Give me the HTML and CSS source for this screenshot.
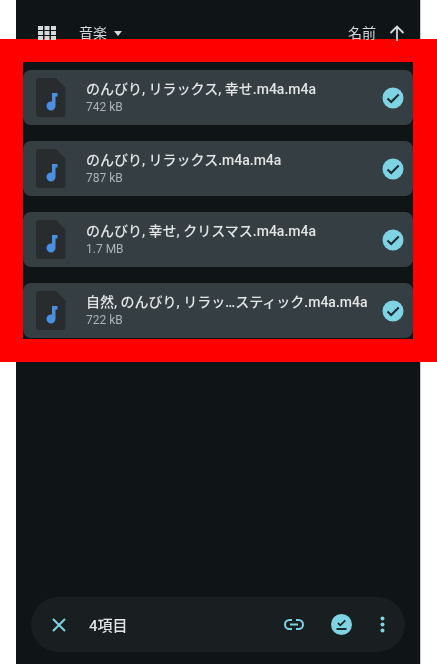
FILE: index.html
```html
<!DOCTYPE html>
<html>
<head>
    <title>音楽</title>
    <link rel="stylesheet" href="styles.css">
</head>
<body>
    <div class="panel">
        <div class="toolbar">
            <svg class="grid-icon" width="18" height="14" viewBox="0 0 18 14">
                <path fill="#d5d9da" d="M0 0h5v4H0zM6.500 0h5v4h-5zM13 0h5v4h-5zM0 5h5v4H0zM6.500 5h5v4h-5zM13 5h5v4h-5zM0 10h5v4H0zM6.500 10h5v4h-5zM13 10h5v4h-5z"/>
            </svg>
            <span class="toolbar-label">音楽</span>
            <span class="caret"></span>
            <span class="sort-label">名前</span>
            <svg class="up-icon" width="16" height="16" viewBox="0 0 16 16">
                <path fill="none" stroke="#d5d9da" stroke-width="1.800" d="M8 16V1.500M1.500 8L8 1.500 14.500 8"/>
            </svg>
        </div>
        <div class="highlight">
            <div class="list">
                <div class="file-row">
                    <svg class="file-icon" width="30" height="39" viewBox="0 0 30 39">
                        <path fill="#292c2e" d="M3 0h17l9.500 9.500V36a3 3 0 0 1-3 3H3a3 3 0 0 1-3-3V3a3 3 0 0 1 3-3z"/>
                        <path fill="#4a90e2" d="M16 15h5.500v3.500H19.500V28a4.500 4.500 0 1 1-3.500-4.400z"/>
                    </svg>
                    <div class="file-text">
                        <div class="file-name">のんびり, リラックス, 幸せ.m4a.m4a</div>
                        <div class="file-size">742 kB</div>
                    </div>
                    <svg class="check-icon" width="22" height="22" viewBox="0 0 22 22">
                        <circle cx="11" cy="11" r="10.500" fill="#7fd4e4"/>
                        <path fill="none" stroke="#1c2a30" stroke-width="2" d="M5.500 11.500l3.700 3.500 7.500-7.500"/>
                    </svg>
                </div>
                <div class="file-row">
                    <svg class="file-icon" width="30" height="39" viewBox="0 0 30 39">
                        <path fill="#292c2e" d="M3 0h17l9.500 9.500V36a3 3 0 0 1-3 3H3a3 3 0 0 1-3-3V3a3 3 0 0 1 3-3z"/>
                        <path fill="#4a90e2" d="M16 15h5.500v3.500H19.500V28a4.500 4.500 0 1 1-3.500-4.400z"/>
                    </svg>
                    <div class="file-text">
                        <div class="file-name">のんびり, リラックス.m4a.m4a</div>
                        <div class="file-size">787 kB</div>
                    </div>
                    <svg class="check-icon" width="22" height="22" viewBox="0 0 22 22">
                        <circle cx="11" cy="11" r="10.500" fill="#7fd4e4"/>
                        <path fill="none" stroke="#1c2a30" stroke-width="2" d="M5.500 11.500l3.700 3.500 7.500-7.500"/>
                    </svg>
                </div>
                <div class="file-row">
                    <svg class="file-icon" width="30" height="39" viewBox="0 0 30 39">
                        <path fill="#292c2e" d="M3 0h17l9.500 9.500V36a3 3 0 0 1-3 3H3a3 3 0 0 1-3-3V3a3 3 0 0 1 3-3z"/>
                        <path fill="#4a90e2" d="M16 15h5.500v3.500H19.500V28a4.500 4.500 0 1 1-3.500-4.400z"/>
                    </svg>
                    <div class="file-text">
                        <div class="file-name">のんびり, 幸せ, クリスマス.m4a.m4a</div>
                        <div class="file-size">1.7 MB</div>
                    </div>
                    <svg class="check-icon" width="22" height="22" viewBox="0 0 22 22">
                        <circle cx="11" cy="11" r="10.500" fill="#7fd4e4"/>
                        <path fill="none" stroke="#1c2a30" stroke-width="2" d="M5.500 11.500l3.700 3.500 7.500-7.500"/>
                    </svg>
                </div>
                <div class="file-row">
                    <svg class="file-icon" width="30" height="39" viewBox="0 0 30 39">
                        <path fill="#292c2e" d="M3 0h17l9.500 9.500V36a3 3 0 0 1-3 3H3a3 3 0 0 1-3-3V3a3 3 0 0 1 3-3z"/>
                        <path fill="#4a90e2" d="M16 15h5.500v3.500H19.500V28a4.500 4.500 0 1 1-3.500-4.400z"/>
                    </svg>
                    <div class="file-text">
                        <div class="file-name">自然, のんびり, リラッ…スティック.m4a.m4a</div>
                        <div class="file-size">722 kB</div>
                    </div>
                    <svg class="check-icon" width="22" height="22" viewBox="0 0 22 22">
                        <circle cx="11" cy="11" r="10.500" fill="#7fd4e4"/>
                        <path fill="none" stroke="#1c2a30" stroke-width="2" d="M5.500 11.500l3.700 3.500 7.500-7.500"/>
                    </svg>
                </div>
            </div>
        </div>
        <div class="action-bar">
            <svg class="close-icon" width="14" height="14" viewBox="0 0 14 14">
                <path fill="none" stroke="#7fd4e4" stroke-width="2" d="M1 1l12 12M13 1L1 13"/>
            </svg>
            <span class="selected-count">4項目</span>
            <svg class="link-icon" width="20" height="11" viewBox="0 0 20 11">
                <path fill="none" stroke="#7fd4e4" stroke-width="2" d="M8 1H5.500a4.500 4.500 0 0 0 0 9H8M12 1h2.500a4.500 4.500 0 0 1 0 9H12M6 5.500h8"/>
            </svg>
            <svg class="select-all-icon" width="21" height="21" viewBox="0 0 21 21">
                <circle cx="10.500" cy="10.500" r="10.500" fill="#7fd4e4"/>
                <path fill="none" stroke="#1c2a30" stroke-width="1.800" d="M7 9l2.300 2.300 5-5M5.500 15h10"/>
            </svg>
            <svg class="more-icon" width="5" height="17" viewBox="0 0 5 17">
                <circle cx="2.500" cy="2.500" r="2" fill="#7fd4e4"/>
                <circle cx="2.500" cy="8.500" r="2" fill="#7fd4e4"/>
                <circle cx="2.500" cy="14.500" r="2" fill="#7fd4e4"/>
            </svg>
        </div>
    </div>
</body>
</html>
```

FILE: styles.css
```css
html, body {
    margin: 0;
    padding: 0;
    height: 100%;
    background-color: #fff;
    overflow: hidden;
}
body {
    font-family: Roboto, "Noto Sans CJK JP", sans-serif;
    padding: 0 16px 0 16px;
    box-sizing: border-box;
}
.panel {
    display: flex;
    flex-direction: column;
    height: 100%;
    width: 404px;
    background-color: #0f1417;
    border-right: 1px solid #c9cbcc;
}
.toolbar {
    display: flex;
    align-items: center;
    height: 39px;
    padding: 27px 15px 0 22px;
    box-sizing: border-box;
    color: #d5d9da;
    font-size: 14px;
    line-height: 12px;
    flex-shrink: 0;
}
.toolbar > *, .file-row > *, .action-bar > * {
    filter: blur(0.5px);
}
.toolbar-label {
    margin-left: 23px;
}
.caret {
    margin-left: 7px;
    border-left: 4.500px solid transparent;
    border-right: 4.500px solid transparent;
    border-top: 5px solid #d5d9da;
}
.sort-label {
    margin-left: auto;
}
.up-icon {
    margin-left: 13px;
}
.highlight {
    margin: 0 -16px 0 -16px;
    width: 437px;
    height: 323px;
    box-sizing: border-box;
    border: solid #ff0000;
    border-width: 23px 24px 23px 23px;
    background-color: #0f1417;
    flex-shrink: 0;
}
.list {
    display: flex;
    flex-direction: column;
    gap: 16px;
    padding-top: 8px;
}
.file-row {
    display: flex;
    align-items: center;
    height: 55px;
    padding: 0 9px 0 13px;
    background-color: #353e43;
    border-radius: 8px;
}
.file-icon {
    flex-shrink: 0;
}
.file-text {
    flex: 1;
    margin-left: 20px;
    min-width: 0;
    white-space: nowrap;
}
.file-name {
    font-size: 14px;
    font-weight: 500;
    line-height: 19px;
    color: #e2e4e5;
}
.file-size {
    font-size: 12px;
    line-height: 16px;
    color: #adb3b6;
}
.check-icon {
    flex-shrink: 0;
}
.action-bar {
    display: flex;
    align-items: center;
    height: 55px;
    margin: auto 15px 12px 15px;
    padding: 0 20px 0 21px;
    background-color: #191e20;
    border-radius: 28px;
}
.selected-count {
    margin-left: 23px;
    font-size: 15px;
    font-weight: 500;
    color: #e2e4e5;
}
.link-icon {
    margin-left: auto;
}
.select-all-icon {
    margin-left: 27px;
}
.more-icon {
    margin-left: 28px;
}
```
